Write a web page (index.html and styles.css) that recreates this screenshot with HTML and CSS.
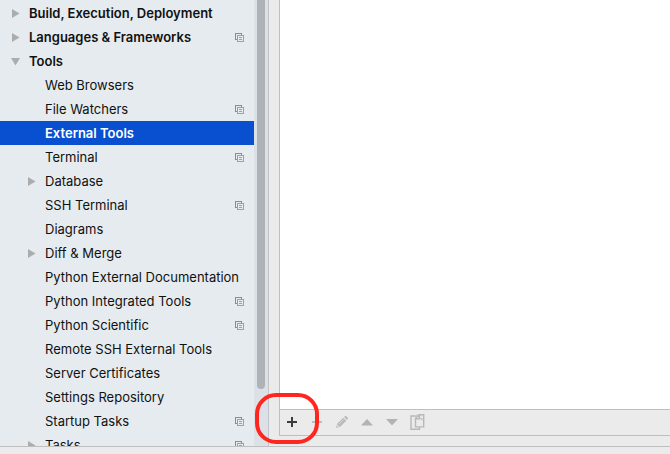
FILE: index.html
```
<!DOCTYPE html>
<html lang="en">
<head>
<meta charset="utf-8">
<title>Preferences</title>
<link rel="stylesheet" href="styles.css">
</head>
<body>
<svg class="defs" aria-hidden="true">
  <symbol id="right" viewBox="0 0 9 9"><path d="M1 0v9L8.500 4.500z" fill="#acacac"/></symbol>
  <symbol id="down" viewBox="0 0 9 9"><path d="M0 1h9L4.500 8.500z" fill="#acacac"/></symbol>
  <symbol id="project" viewBox="0 0 9 9" shape-rendering="crispEdges">
    <path d="M0 0h7v1H0zM0 1h1v6H0zM1 6h1v1H1zM6 1h1v1H6z" fill="#5b9bc0"/>
    <path d="M2 2h7v7H2zM3 3v5h5V3z" fill="#a0a0a0" fill-rule="evenodd"/>
    <path d="M4 4h3v1H4zM4 6h3v1H4z" fill="#a0a0a0"/>
  </symbol>
</svg>
<main class="content">
  <nav class="sidebar" aria-label="Settings">
    <ul class="tree">
      <li class="row group"><svg class="arrow"><use href="#right"/></svg><span class="label">Build, Execution, Deployment</span></li>
      <li class="row group"><svg class="arrow"><use href="#right"/></svg><span class="label">Languages &amp; Frameworks</span><svg class="mark"><use href="#project"/></svg></li>
      <li class="row group"><svg class="arrow"><use href="#down"/></svg><span class="label">Tools</span></li>
      <li class="row child"><span class="label">Web Browsers</span></li>
      <li class="row child"><span class="label">File Watchers</span><svg class="mark"><use href="#project"/></svg></li>
      <li class="row child selected" aria-current="page"><span class="label">External Tools</span></li>
      <li class="row child"><span class="label">Terminal</span><svg class="mark"><use href="#project"/></svg></li>
      <li class="row child parent"><svg class="arrow"><use href="#right"/></svg><span class="label">Database</span></li>
      <li class="row child"><span class="label">SSH Terminal</span><svg class="mark"><use href="#project"/></svg></li>
      <li class="row child"><span class="label">Diagrams</span></li>
      <li class="row child parent"><svg class="arrow"><use href="#right"/></svg><span class="label">Diff &amp; Merge</span></li>
      <li class="row child"><span class="label">Python External Documentation</span></li>
      <li class="row child"><span class="label">Python Integrated Tools</span><svg class="mark"><use href="#project"/></svg></li>
      <li class="row child"><span class="label">Python Scientific</span><svg class="mark"><use href="#project"/></svg></li>
      <li class="row child"><span class="label">Remote SSH External Tools</span></li>
      <li class="row child"><span class="label">Server Certificates</span></li>
      <li class="row child"><span class="label">Settings Repository</span></li>
      <li class="row child"><span class="label">Startup Tasks</span><svg class="mark"><use href="#project"/></svg></li>
      <li class="row child parent"><svg class="arrow"><use href="#right"/></svg><span class="label">Tasks</span><svg class="mark"><use href="#project"/></svg></li>
    </ul>
    <div class="track"><div class="thumb"></div></div>
  </nav>
  <section class="panel" aria-label="External Tools">
    <div class="list"></div>
    <div class="toolbar">
      <button class="tool" type="button" aria-label="Add"><svg viewBox="0 0 25 25"><path d="M7 11h4V7h2v4h4v2h-4v4h-2v-4H7z" fill="#3c3c3c"/></svg><span class="highlight"></span></button>
      <button class="tool" type="button" aria-label="Remove" disabled><svg viewBox="0 0 25 25"><path d="M7 11h10v2H7z" fill="#bdbdbd"/></svg></button>
      <button class="tool" type="button" aria-label="Edit" disabled><svg viewBox="0 0 25 25"><path d="M6 18l1.200-4.200 6-6 3 3-6 6z" fill="#b9b9b9"/><path d="M14 7l.9-.8q.8-.5 1.600.2l1.200 1.200q.6.800 0 1.500L17 10z" fill="#b9b9b9"/><path d="M8.500 14.500l5-5" stroke="#dedede" stroke-width=".8"/><path d="M7.600 14.800l1.700 1.700-2.100.6z" fill="#e8e8e8"/></svg></button>
      <button class="tool" type="button" aria-label="Move up" disabled><svg viewBox="0 0 25 25"><path d="M6 15.500h12L12 9z" fill="#b3b3b3"/></svg></button>
      <button class="tool" type="button" aria-label="Move down" disabled><svg viewBox="0 0 25 25"><path d="M6 9h12l-6 6.500z" fill="#b3b3b3"/></svg></button>
      <button class="tool" type="button" aria-label="Copy" disabled><svg viewBox="0 0 25 25" fill="none" stroke="#b8b8b8"><path d="M10.500 6H6v13.200h8.500V17" stroke-width="1.400"/><path d="M14.200 4.700h4.500v12.200h-8.200V8.400zM14.500 4.700v4h-4" stroke-width="1.400"/><path d="M10 6.500L12.500 4.500M15.500 8.500h1.500v2" stroke-width="1"/></svg></button>
    </div>
  </section>
</main>
<footer class="footer"></footer>
</body>
</html>
```
FILE: styles.css
```
* {
  box-sizing: border-box;
}

body {
  display: flex;
  flex-direction: column;
  height: 100vh;
  margin: 0;
  overflow: hidden;
  background: #ebebeb;
  color: #111;
  font: 13px/24px Inter, "Liberation Sans", sans-serif;
}

.defs {
  display: none;
}

.content {
  display: flex;
  flex: 1;
  gap: 10px;
  min-height: 0;
}

.sidebar {
  display: flex;
  flex: none;
  width: 269px;
  overflow: hidden;
  border-right: 1px solid #c0c4c8;
  background: #e5ebef;
}

.tree {
  flex: 1;
  margin: 0;
  padding: 1px 0 0;
  list-style: none;
}

.row {
  display: flex;
  align-items: center;
  height: 24px;
  padding: 0 10px 0 11px;
}

.label {
  flex: 1;
  white-space: nowrap;
}

.group {
  font-weight: 600;
}

.child {
  padding-left: 45px;
}

.parent {
  padding-left: 27px;
}

.selected {
  background: #0850d0;
  color: #fff;
  font-weight: 600;
}

.arrow {
  flex: none;
  width: 9px;
  height: 9px;
  margin-right: 9px;
}

.mark {
  flex: none;
  width: 9px;
  height: 9px;
}

.track {
  flex: none;
  width: 14px;
  padding: 0 3px;
  background: #dbe1e6;
}

.thumb {
  height: 389px;
  border-radius: 0 0 4px 4px;
  background: #afb3b8;
}

.panel {
  display: flex;
  flex: 1;
  flex-direction: column;
  margin-bottom: 10px;
  border: solid #bfbfbf;
  border-width: 0 0 1px 1px;
}

.list {
  flex: 1;
  background: #fff;
}

.toolbar {
  display: flex;
  border-top: 1px solid #bfbfbf;
}

.tool {
  position: relative;
  width: 25px;
  height: 25px;
  padding: 0;
  border: 0;
  background: none;
}

.tool svg {
  display: block;
  width: 25px;
  height: 25px;
}

.highlight {
  position: absolute;
  z-index: 1;
  top: -17px;
  left: -25px;
  width: 64px;
  height: 51px;
  border: 4px solid #ff2620;
  border-radius: 21px;
  pointer-events: none;
}

.footer {
  flex: none;
  height: 8px;
  border-top: 1px solid #bfbfbf;
}
```
